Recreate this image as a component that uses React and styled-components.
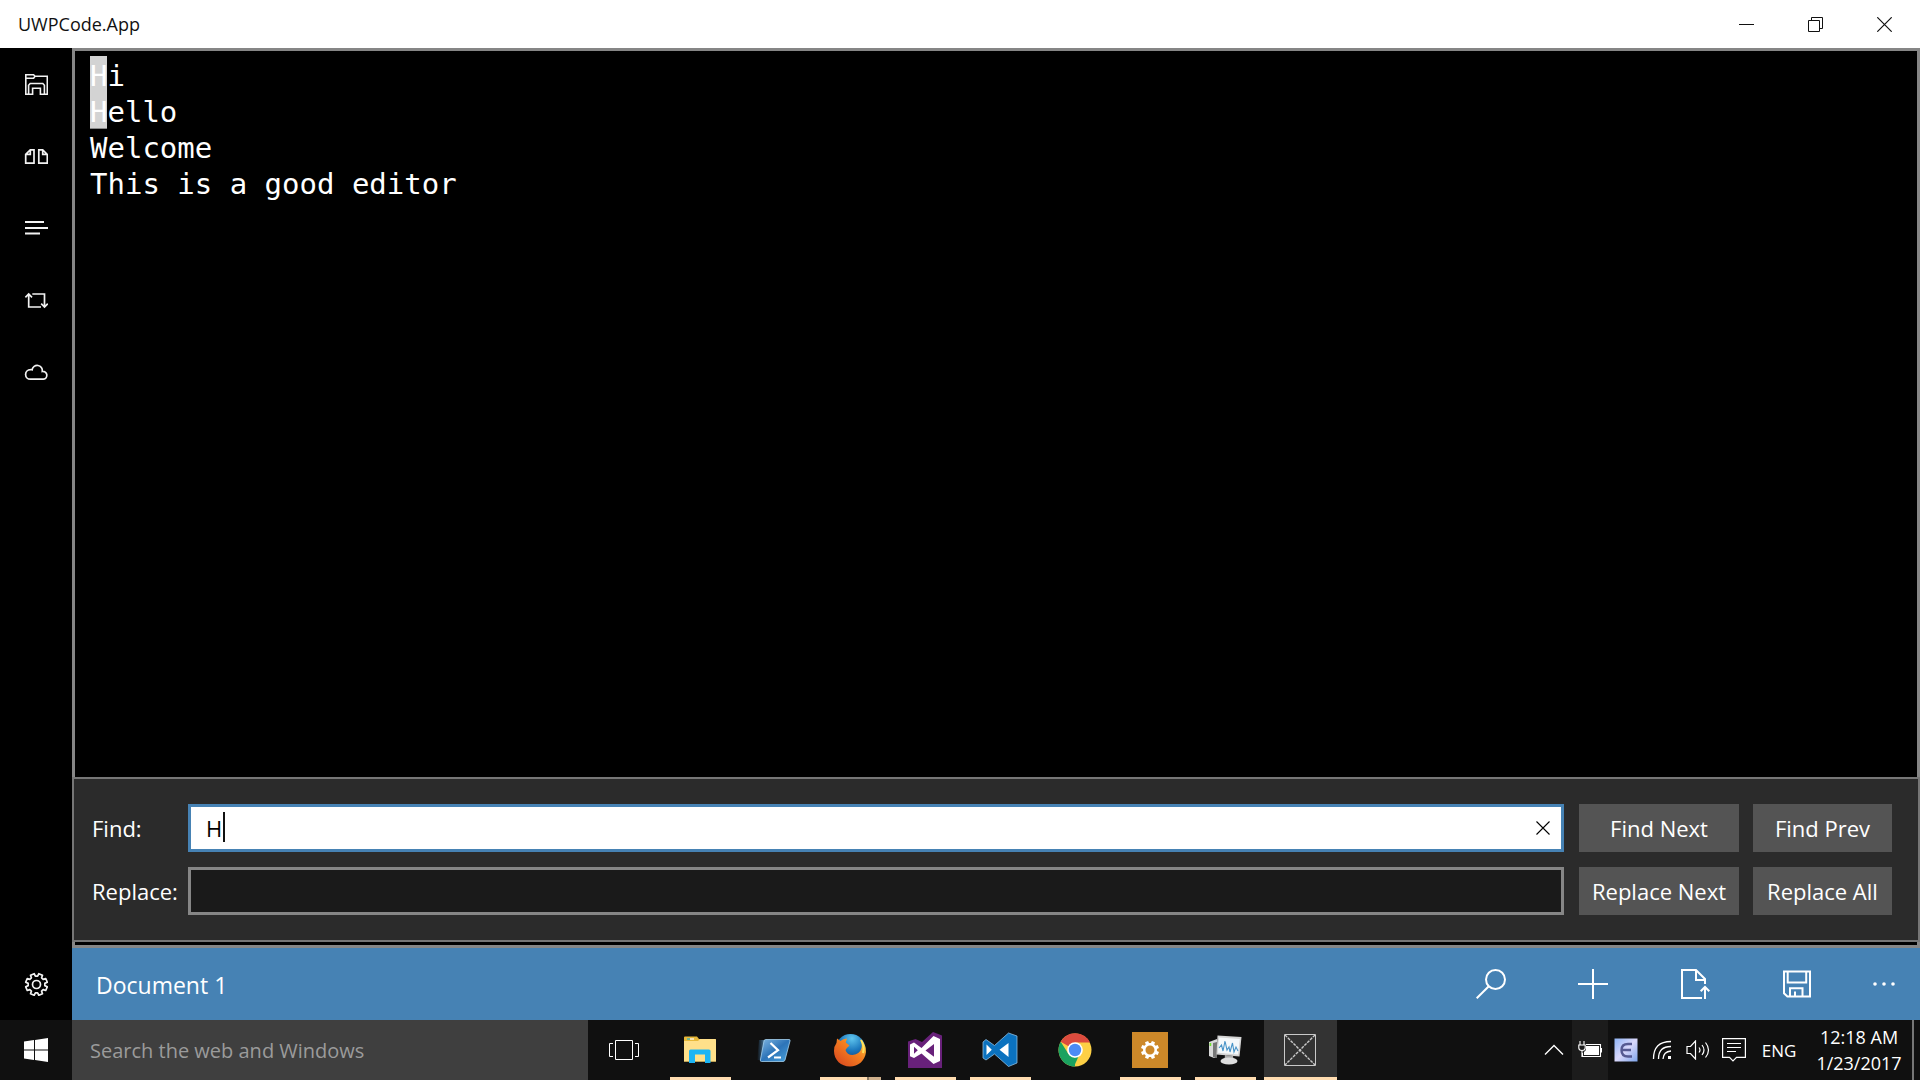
import React, { useState } from "react";
import styled, { createGlobalStyle } from "styled-components";

const GlobalStyle = createGlobalStyle`
  *, *::before, *::after { box-sizing: border-box; }
  body { margin: 0; background: #000; font-family: "Open Sans", "Noto Sans", sans-serif; }
  button, input { font-family: inherit; }
`;

/* ---------- layout ---------- */

const Desktop = styled.div`
  display: flex;
  flex-direction: column;
  height: 100vh;
  overflow: hidden;
`;

const TitleBar = styled.header`
  display: flex;
  align-items: center;
  height: 48px;
  flex: none;
  padding: 0 1px 0 18px;
  background: #fff;
  color: #111;
`;

const AppTitle = styled.h1`
  margin: 0;
  flex: 1;
  font-size: 18px;
  font-weight: 400;
  line-height: 24px;
`;

const IconButton = styled.button`
  display: flex;
  align-items: center;
  justify-content: center;
  flex: none;
  width: ${(p) => p.$width}px;
  height: ${(p) => p.$height}px;
  padding: 0;
  border: 0;
  background: ${(p) => p.$background || "transparent"};
  color: inherit;
`;

const Workspace = styled.div`
  display: flex;
  flex: 1;
  min-height: 0;
`;

const SideBar = styled.nav`
  display: flex;
  flex-direction: column;
  flex: none;
  width: 72px;
  background: #000;
  color: #f2f2f2;
`;

const Spacer = styled.div`
  flex: 1;
`;

const Main = styled.main`
  display: flex;
  flex-direction: column;
  flex: 1;
  min-width: 0;
`;

const EditorFrame = styled.section`
  display: flex;
  flex-direction: column;
  flex: 1;
  min-height: 0;
  border: 3px solid #868686;
  background: #000;
`;

const TextArea = styled.div`
  flex: 1;
  min-height: 0;
  padding: 5px 15px;
  color: #fff;
  font-family: "DejaVu Sans Mono", monospace;
  font-size: 29px;
  line-height: 40px;
  outline: none;
`;

const Line = styled.div`
  height: 36px;
  white-space: pre;
`;

const Match = styled.mark`
  display: inline-block;
  height: 37px;
  border-bottom: 1px solid #8a8a8a;
  background: #d3d3d3;
  color: #fff;
`;

const FindPanel = styled.form`
  display: grid;
  grid-template-columns: 96px minmax(0, 1fr) 160px 139px;
  gap: 15px 14px;
  align-items: center;
  margin: 0 -3px 3px;
  padding: 25px 26px 25px 18px;
  border: 2px solid #767676;
  background: #2b2b2b;
  color: #fff;
`;

const FieldLabel = styled.label`
  margin-right: -14px;
  font-size: 22px;
  line-height: 30px;
`;

const Field = styled.div`
  position: relative;
  display: flex;
  height: 48px;
  margin: 0 1px 0 -14px;
  border: 3px solid ${(p) => (p.$active ? "#4682b4" : "#868686")};
  background: ${(p) => (p.$active ? "#fff" : "#1a1a1a")};
  color: ${(p) => (p.$active ? "#000" : "#fff")};
`;

const FieldInput = styled.input`
  flex: 1;
  min-width: 0;
  padding: 0 15px;
  border: 0;
  outline: none;
  background: transparent;
  color: inherit;
  font-size: 22px;
`;

const Caret = styled.span`
  position: absolute;
  left: 32px;
  top: 5px;
  width: 2px;
  height: 30px;
  background: #111;
`;

const PanelButton = styled.button`
  height: 48px;
  padding: 0;
  border: 0;
  background: #545454;
  color: #fff;
  font-size: 22px;
  white-space: nowrap;
`;

const CommandBar = styled.footer`
  display: flex;
  align-items: center;
  height: 72px;
  flex: none;
  padding-left: 24px;
  background: #4682b4;
  color: #fff;
`;

const DocumentName = styled.h2`
  flex: 1;
  margin: 0;
  padding-top: 2px;
  font-size: 23px;
  font-weight: 400;
  line-height: 32px;
`;

const TaskBar = styled.footer`
  display: flex;
  height: 60px;
  flex: none;
  background: #101010;
  color: #fff;
`;

const TaskSearch = styled.input`
  width: 516px;
  flex: none;
  padding: 0 18px;
  border: 0;
  outline: none;
  background: #3f3f3f;
  color: #fff;
  font-size: 20px;
  &::placeholder { color: #9b9b9b; opacity: 1; }
`;

const TaskList = styled.div`
  display: flex;
  gap: 2px;
  flex: 1;
`;

const TaskButton = styled.button`
  display: flex;
  flex-direction: column;
  align-items: center;
  width: 73px;
  height: 60px;
  padding: 0;
  border: 0;
  background: ${(p) => (p.$active ? "#333" : "transparent")};
  color: #fff;
  &:first-child { margin-right: 1px; }
`;

const TaskIcon = styled.span`
  display: flex;
  flex: 1;
  align-items: center;
  padding: 3px 1px 0 0;
`;

const Running = styled.span`
  align-self: ${(p) => (p.$active ? "stretch" : "center")};
  width: ${(p) => (p.$active ? "auto" : "61px")};
  height: 3px;
  background: ${(p) =>
    p.$state === "none"
      ? "transparent"
      : p.$state === "stacked"
      ? "linear-gradient(90deg, #ffdcb0 47px, #8c7a63 47px, #8c7a63 49px, #cfb08c 49px)"
      : "#ffdcb0"};
`;

const Tray = styled.div`
  display: flex;
  align-items: center;
  flex: none;
`;

const Language = styled.button`
  width: 54px;
  height: 60px;
  padding: 0;
  border: 0;
  background: transparent;
  color: #fff;
  font-size: 17px;
`;

const Clock = styled.time`
  width: 106px;
  font-size: 18px;
  line-height: 26px;
  text-align: center;
`;

const ShowDesktop = styled.button`
  width: 8px;
  height: 60px;
  padding: 0;
  border: 0;
  border-left: 2px solid #767676;
  background: #101010;
`;

/* ---------- icons ---------- */

function Glyph({ size = 24, w, h, stroke = 1.7, children }) {
  const width = w || size;
  const height = h || size;
  return (
    <svg width={width} height={height} viewBox={`0 0 ${width} ${height}`} fill="none"
      stroke="currentColor" strokeWidth={stroke} aria-hidden="true">
      {children}
    </svg>
  );
}

function gearPath(cx, cy, outer, inner, teeth) {
  const step = (Math.PI * 2) / teeth;
  const points = [];
  for (let i = 0; i < teeth; i += 1) {
    const mid = i * step + step / 2 - Math.PI / 2;
    [[inner, -0.33], [outer, -0.23], [outer, 0.23], [inner, 0.33]].forEach(([r, k]) => {
      const a = mid + k * step;
      points.push(`${(cx + r * Math.cos(a)).toFixed(2)} ${(cy + r * Math.sin(a)).toFixed(2)}`);
    });
  }
  return `M${points.join("L")}Z`;
}

const MinimizeIcon = () => <Glyph size={15} stroke={1}><path d="M0 7.5H15" /></Glyph>;
const RestoreIcon = () => (
  <Glyph size={15} stroke={1}><path d="M.5 3.5H11.5V14.5H.5ZM3.5 3.5V.5H14.5V11.5H11.5" /></Glyph>
);
const CloseIcon = () => <Glyph size={15} stroke={1.2}><path d="M.3.3 14.7 14.7M14.7.3.3 14.7" /></Glyph>;
const ClearIcon = () => <Glyph size={14} stroke={1.1}><path d="M.5.5 13.5 13.5M13.5.5.5 13.5" /></Glyph>;

const FolderIcon = () => (
  <Glyph stroke={1.6}>
    <path d="M4.5 22.2H1.8V2.8H9.6L11 4.3H23.3V22.2H20.5M1.8 6.2H9.6L11 4.3" />
    <path d="M4.6 22.2V13.2L6.2 11.5H18.8L20.4 13.2V22.2H16.4V16.2H8.6V22.2Z" />
  </Glyph>
);
const PagesIcon = () => (
  <Glyph>
    <path d="M10 5.8V19.2H1.7V10.4L6.3 5.8ZM6.3 5.8V10.4H1.7M14.8 5.8V19.2H23.3V10.4L18.7 5.8ZM18.7 5.8V10.4H23.3" />
  </Glyph>
);
const LinesIcon = () => (
  <Glyph stroke={1.8}><path d="M1 6H20M1 12H24M1 17.5H16" /></Glyph>
);
const LoopIcon = () => (
  <Glyph><path d="M17 19H4.7V6M1.4 9.3 4.7 6 8 9.3M8.3 6H20.5V19M17.2 15.7 20.5 19 23.8 15.7" /></Glyph>
);
const CloudIcon = () => (
  <Glyph>
    <path d="M6.4 19.2A4.8 4.8 0 0 1 6.4 9.6Q7.3 9.5 8.1 9.8A5 5 0 0 1 18.3 11.4 3.9 3.9 0 1 1 19.5 19.2Z" />
  </Glyph>
);
const GearIcon = () => (
  <Glyph>
    <path d={gearPath(12.5, 12.5, 11, 8.4, 8)} strokeLinejoin="round" />
    <circle cx="12.5" cy="12.5" r="4" />
  </Glyph>
);

const SearchIcon = () => (
  <Glyph size={30} stroke={2}><circle cx="19.5" cy="10.5" r="9.5" /><path d="M12.8 17.2.7 29.3" /></Glyph>
);
const PlusIcon = () => <Glyph size={30} stroke={2}><path d="M15 0V30M0 15H30" /></Glyph>;
const OpenIcon = () => (
  <Glyph size={30} stroke={2}>
    <path d="M22 29H2V1H16L25 10V15M16 1V11H25M25 30V18M20.7 22.3 25 18 29.3 22.3" />
  </Glyph>
);
const SaveIcon = () => (
  <Glyph size={30} stroke={2}>
    <path d="M2 2.6H28V27.4H5.4L2 24.2ZM5.7 2.6V13.5H24.2V2.6M8 27.4V19.3H20.5V27.4M13 27.4V22.5" />
  </Glyph>
);
const MoreIcon = () => (
  <Glyph w={24} h={4}>
    <g fill="currentColor" stroke="none">
      <circle cx="3" cy="2" r="1.8" /><circle cx="12" cy="2" r="1.8" /><circle cx="21" cy="2" r="1.8" />
    </g>
  </Glyph>
);

const WindowsIcon = () => (
  <Glyph><path stroke="none" fill="#fff" d="M0 3.4 10 2V11.4H0ZM11 1.9 24 0V11.4H11ZM0 12.4H10V22L0 20.6ZM11 12.4H24V24L11 22.1Z" /></Glyph>
);
const TaskViewIcon = () => (
  <Glyph w={30} h={20} stroke={1}>
    <path d="M6.5.5H23.5V19.5H6.5ZM4 3.5H.5V16.5H4M26 3.5H29.5V16.5H26" />
  </Glyph>
);
const ExplorerIcon = () => (
  <Glyph w={32} h={28} stroke={0}>
    <path d="M0 1.5Q0 .5 1 .5H13L15 3H31Q32 3 32 4V25.5H0Z" fill="#e8b93a" />
    <path d="M0 5H14L16 3H31Q32 3 32 4V25.5H0Z" fill="#ffe08a" />
    <path d="M3 3H6" stroke="#27b5c9" strokeWidth="1.2" /><path d="M6 3H10" stroke="#fff" strokeWidth="1.2" />
    <path d="M5 27V15Q5 13.5 6.5 13.5H25Q26.5 13.5 26.5 15V27H21V18.5H11V27Z" fill="#1db5f4" />
  </Glyph>
);
const PowerShellIcon = () => (
  <Glyph w={36} h={23} stroke={0}>
    <defs>
      <linearGradient id="ps" x1="0" y1="0" x2="1" y2="1">
        <stop offset="0" stopColor="#7fb6e2" /><stop offset=".5" stopColor="#2d74b8" /><stop offset="1" stopColor="#4aa4de" />
      </linearGradient>
      <linearGradient id="psTrail"><stop offset="0" stopColor="#3c7eb8" stopOpacity="0" /><stop offset="1" stopColor="#6ba7d4" /></linearGradient>
    </defs>
    <path d="M2 1H10L6 21H0Z" fill="url(#psTrail)" />
    <path d="M8.5.5H32Q33.5.5 33 2L28 21Q27.5 22.5 26 22.5H4.5Q3 22.5 3.4 21L7 2Q7.3.5 8.5.5Z" fill="url(#ps)" stroke="#a5d0ef" strokeWidth=".8" />
    <path d="M13.5 4 21 11.2 11 18.5M17 18.5H24" stroke="#fff" strokeWidth="2.2" fill="none" />
  </Glyph>
);
const FirefoxIcon = () => (
  <Glyph w={34} h={34} stroke={0}>
    <defs>
      <radialGradient id="ffGlobe" cx=".55" cy=".15" r=".8">
        <stop offset="0" stopColor="#5fc5ee" /><stop offset=".5" stopColor="#1c78bd" /><stop offset="1" stopColor="#10366f" />
      </radialGradient>
      <linearGradient id="ffFox" x1="1" y1="0" x2="0" y2="1">
        <stop offset="0" stopColor="#ffe14a" /><stop offset=".4" stopColor="#f58220" /><stop offset="1" stopColor="#d6401f" />
      </linearGradient>
    </defs>
    <circle cx="17.5" cy="16" r="15" fill="url(#ffGlobe)" />
    <path d="M4 5.5 7.5 8Q10 5.5 14 5.5L12.7 9.5 16.5 12.5Q13.5 15 12.5 17 14 22 19.5 22 27 21 28.5 15 29.5 10 27 6 33.5 11.5 33 19C32 28 25 33.5 17 33.5 8 33.5 1 27 1 18Q1 13 3.5 10Z" fill="url(#ffFox)" />
    <path d="M28 7Q32 13 30 20" stroke="#ffe25a" strokeWidth="2" fill="none" />
  </Glyph>
);
const VisualStudioIcon = () => (
  <Glyph w={34} h={36} stroke={0}>
    <path d="M0 9.5 7.5 7 14 10 25 0 34 3.5V36H0Z" fill="#68217a" />
    <path fillRule="evenodd" d="M2 12.5 6 10.5 13.5 16 25.5 4 32 7V29L25.5 32 13.5 21.5 6 26 2 24.2ZM6 14.8V21.8L9.8 18.3ZM17.5 18.5 26 24.8V12Z" fill="#fff" />
  </Glyph>
);
const VSCodeIcon = () => (
  <Glyph w={36} h={36} stroke={0}>
    <path d="M1 10 4 7.5 12.5 13.5 26.5 1 35 4V31L26.5 34.5 12.5 22 4 28 1 26Z" fill="#0b72bf" stroke="#8dbde0" strokeWidth=".8" />
    <path d="M4.5 12.5V23L9.8 17.8ZM17.5 17.8 26.5 25V11Z" fill="#fff" />
  </Glyph>
);
const ChromeIcon = () => (
  <Glyph w={34} h={34} stroke={0}>
    <circle cx="17" cy="17" r="16.5" fill="#fdd045" />
    <path d="M17 17 2.7 8.8A16.5 16.5 0 0 1 32 9.5H17Z" fill="#dc4b3e" />
    <path d="M2.7 8.8 10.5 21 17 25 17 33.5A16.5 16.5 0 0 1 2.7 8.8Z" fill="#1aa260" />
    <path d="M17 24.5 20.5 23.5 16 33.5Z" fill="#1aa260" />
    <circle cx="17" cy="17" r="7.8" fill="#fff" />
    <circle cx="17" cy="17" r="6.2" fill="#4c8bf5" />
  </Glyph>
);
const SettingsTileIcon = () => (
  <Glyph w={36} h={36} stroke={0}>
    <rect width="36" height="36" fill="#cd8829" />
    <path fillRule="evenodd" d={`${gearPath(18, 18, 9.2, 7, 8)}M22.5 18A4.5 4.5 0 1 0 13.5 18 4.5 4.5 0 1 0 22.5 18Z`} fill="#fff" />
  </Glyph>
);
const MonitorIcon = () => (
  <Glyph w={34} h={32} stroke={0}>
    <path d="M1 8 9 5V23L6 24 1 22Z" fill="#d9d9d9" /><path d="M5 9 9 8V24L5 23Z" fill="#777" />
    <rect x="1.6" y="9" width="1.6" height="3" fill="#6ee02c" />
    <path d="M9.5 1.5 33.5 3 31.5 22.5 8.5 20.5Z" fill="#d5d5d5" />
    <path d="M11 3.5 31.8 5 30 20.5 10 18.7Z" fill="#f4f8fa" />
    <path d="M11 14 13.5 11 15 17 17 7 19 16 21 13 22 18 24.5 9 26 18 28 13 30 17" stroke="#4793c7" strokeWidth="1.1" fill="none" />
    <path d="M17 21 25 22 25.5 25H16.5Z" fill="#aaa" /><ellipse cx="21" cy="27" rx="8.5" ry="3.6" fill="#dedede" />
  </Glyph>
);
const PlaceholderIcon = () => (
  <Glyph w={32} h={32} stroke={1}>
    <path d="M.5.5H31.5V31.5H.5Z" stroke="#c9c9c9" />
    <path d="M1 1 31 31M31 1 1 31" stroke="#c9c9c9" strokeWidth="1.4" strokeDasharray="3 1" />
  </Glyph>
);

const ChevronIcon = () => <Glyph w={20} h={12} stroke={1.4}><path d="M1 10.5 10 1.5 19 10.5" /></Glyph>;
const BatteryIcon = () => (
  <Glyph w={24} h={18} stroke={1.1}>
    <path d="M8 3.5H22.5V15.5H4.5V12M22.5 7.5H23.5V11.5" />
    <path d="M8 5H21V14H6V11L8 9Z" fill="currentColor" stroke="none" />
    <path d="M2 0V3.5M6 0V3.5M.8 4H7.2V7Q7.2 9.5 4 9.5 .8 9.5 .8 7ZM4 9.5V16" />
  </Glyph>
);
const UtilityIcon = () => (
  <Glyph stroke={0}>
    <defs><linearGradient id="tileE" x1="0" y1="0" x2="1" y2="1">
      <stop offset="0" stopColor="#8fb4f5" /><stop offset=".5" stopColor="#d9d8fb" /><stop offset="1" stopColor="#7ea4ea" />
    </linearGradient></defs>
    <rect x=".5" y=".5" width="23" height="23" fill="url(#tileE)" stroke="#4670cf" />
    <path d="M18 6H14Q7.5 6 7.5 12.2T14 18.5H18M8 12H17" stroke="#565a92" strokeWidth="2.4" fill="none" />
  </Glyph>
);
const WifiIcon = () => (
  <Glyph w={20} h={20} stroke={1.3}>
    <path d="M1.5 19Q1.5 1.5 19 1.5" /><path d="M6.5 19Q6.5 6.5 19 6.5M11 19Q11.5 11.5 19 11" />
    <rect x="16" y="16" width="3" height="3" fill="currentColor" stroke="none" />
  </Glyph>
);
const VolumeIcon = () => (
  <Glyph w={24} h={20} stroke={1.2}>
    <path d="M1 6.5H4.5L9.5 1V19L4.5 13.5H1ZM13 7.5Q15 10 13 12.5M16 5Q20 10 16 15M19.5 2.5Q25.5 10 19.5 17.5" />
  </Glyph>
);
const ActionIcon = () => (
  <Glyph w={24} h={24} stroke={1.2}>
    <path d="M.6.6H23.4V19.4H14.5L11 23 7.5 19.4H.6ZM5 5.5H19M5 9.5H19M5 13.5H14" />
  </Glyph>
);

/* ---------- content ---------- */

const sideItems = [
  ["Explorer", FolderIcon],
  ["Compare", PagesIcon],
  ["Outline", LinesIcon],
  ["Sync", LoopIcon],
  ["Cloud", CloudIcon],
];

const commands = [
  ["Search", SearchIcon],
  ["New", PlusIcon],
  ["Open", OpenIcon],
  ["Save", SaveIcon],
];

const tasks = [
  ["Task View", TaskViewIcon, "none"],
  ["File Explorer", ExplorerIcon, "running"],
  ["PowerShell", PowerShellIcon, "none"],
  ["Firefox", FirefoxIcon, "stacked"],
  ["Visual Studio", VisualStudioIcon, "running"],
  ["Visual Studio Code", VSCodeIcon, "running"],
  ["Chrome", ChromeIcon, "none"],
  ["Settings", SettingsTileIcon, "running"],
  ["Monitor", MonitorIcon, "running"],
  ["UWPCode", PlaceholderIcon, "active"],
];

const trayItems = [
  ["Hidden icons", ChevronIcon],
  ["Battery", BatteryIcon, "#1c1c1c"],
  ["Utility", UtilityIcon],
  ["Network", WifiIcon],
  ["Volume", VolumeIcon],
  ["Notifications", ActionIcon],
];

const lines = ["Hi", "Hello", "Welcome", "This is a good editor"];

function EditorLine({ text, query }) {
  if (query && text.startsWith(query)) {
    return <Line><Match>{query}</Match>{text.slice(query.length)}</Line>;
  }
  return <Line>{text}</Line>;
}

export default function App() {
  const [query, setQuery] = useState("H");
  const [replacement, setReplacement] = useState("");

  return (
    <Desktop>
      <GlobalStyle />
      <TitleBar>
        <AppTitle>UWPCode.App</AppTitle>
        <IconButton $width={69} $height={48} aria-label="Minimize"><MinimizeIcon /></IconButton>
        <IconButton $width={69} $height={48} aria-label="Restore"><RestoreIcon /></IconButton>
        <IconButton $width={69} $height={48} aria-label="Close"><CloseIcon /></IconButton>
      </TitleBar>

      <Workspace>
        <SideBar>
          {sideItems.map(([name, Icon]) => (
            <IconButton key={name} $width={72} $height={72} aria-label={name}><Icon /></IconButton>
          ))}
          <Spacer />
          <IconButton $width={72} $height={72} aria-label="Settings"><GearIcon /></IconButton>
        </SideBar>

        <Main>
          <EditorFrame>
            <TextArea role="textbox" aria-multiline="true" aria-label="Editor"
              contentEditable suppressContentEditableWarning spellCheck={false}>
              {lines.map((text) => <EditorLine key={text} text={text} query={query} />)}
            </TextArea>
            <FindPanel onSubmit={(e) => e.preventDefault()}>
              <FieldLabel htmlFor="find">Find:</FieldLabel>
              <Field $active>
                <FieldInput id="find" value={query} autoComplete="off" onChange={(e) => setQuery(e.target.value)} />
                {query === "H" && <Caret />}
                <IconButton type="button" $width={37} $height={42} aria-label="Clear" onClick={() => setQuery("")}>
                  <ClearIcon />
                </IconButton>
              </Field>
              <PanelButton type="button">Find Next</PanelButton>
              <PanelButton type="button">Find Prev</PanelButton>
              <FieldLabel htmlFor="replace">Replace:</FieldLabel>
              <Field>
                <FieldInput id="replace" value={replacement} autoComplete="off" onChange={(e) => setReplacement(e.target.value)} />
              </Field>
              <PanelButton type="button">Replace Next</PanelButton>
              <PanelButton type="button">Replace All</PanelButton>
            </FindPanel>
          </EditorFrame>

          <CommandBar>
            <DocumentName>Document 1</DocumentName>
            {commands.map(([name, Icon]) => (
              <IconButton key={name} $width={102} $height={72} aria-label={name}><Icon /></IconButton>
            ))}
            <IconButton $width={72} $height={72} aria-label="More"><MoreIcon /></IconButton>
          </CommandBar>
        </Main>
      </Workspace>

      <TaskBar>
        <IconButton $width={72} $height={60} aria-label="Start"><WindowsIcon /></IconButton>
        <TaskSearch type="text" aria-label="Search" placeholder="Search the web and Windows" />
        <TaskList>
          {tasks.map(([name, Icon, state]) => (
            <TaskButton key={name} $active={state === "active"} aria-label={name}>
              <TaskIcon><Icon /></TaskIcon>
              <Running $state={state} $active={state === "active"} />
            </TaskButton>
          ))}
        </TaskList>
        <Tray>
          {trayItems.map(([name, Icon, background]) => (
            <IconButton key={name} $width={36} $height={60} $background={background} aria-label={name}><Icon /></IconButton>
          ))}
          <Language>ENG</Language>
          <Clock>12:18 AM<br />1/23/2017</Clock>
          <ShowDesktop aria-label="Show desktop" />
        </Tray>
      </TaskBar>
    </Desktop>
  );
}
